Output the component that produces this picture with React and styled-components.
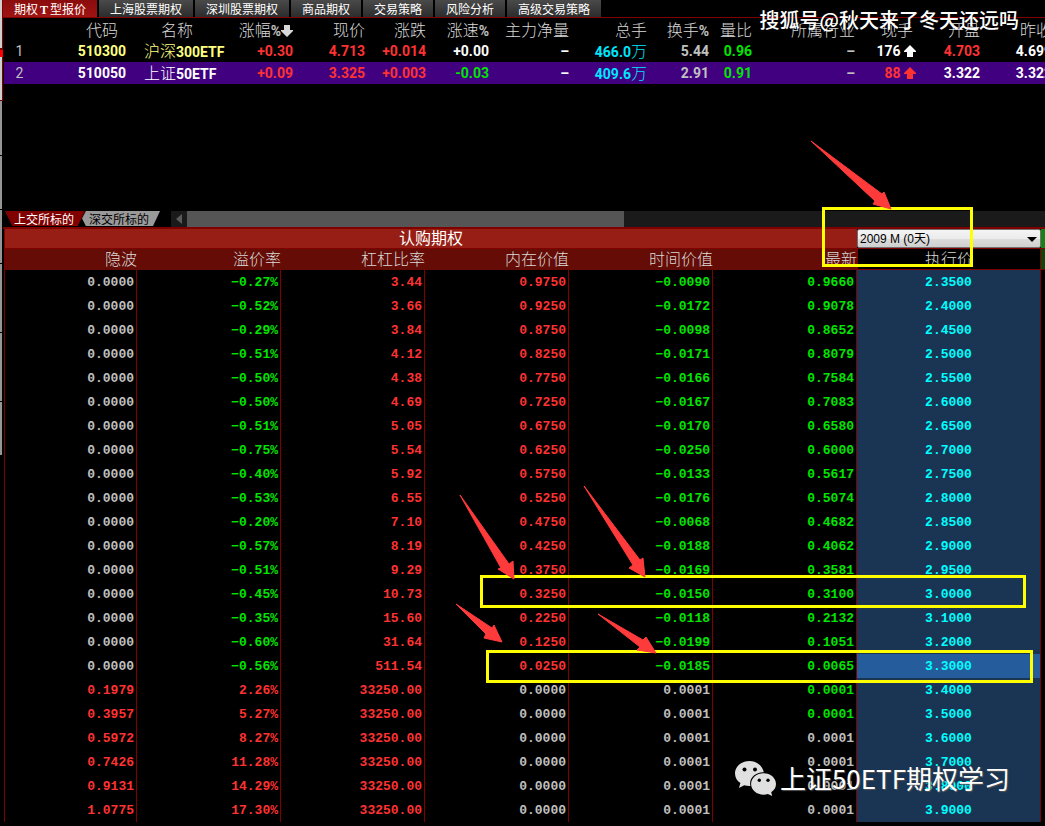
import React from 'react';
import styled, { createGlobalStyle } from 'styled-components';

const RED = '#ff3232';
const GREEN = '#00e600';
const GREY = '#c0c0c0';
const HEAD = '#d8d8d8';
const CYAN = '#00e6ff';
const WHITE = '#ffffff';
const LINE = '#800000';

const marketTabs = ['上海股票期权', '深圳股票期权', '商品期权', '交易策略', '风险分析', '高级交易策略'];

const quoteColumns = [34, 88, 100, 67, 72, 61, 63, 80, 78, 62, 43, 103, 61, 64, 72];

const quotes = [
  {
    id: 1,
    code: '510300',
    name: '沪深',
    suffix: '300ETF',
    nameColor: '#ffff80',
    values: [
      ['+0.30', RED], ['4.713', RED], ['+0.014', RED], ['+0.00', WHITE], ['–', WHITE], ['466.0', CYAN, '万'],
      ['5.44', GREY], ['0.96', GREEN], ['–', GREY], ['176', WHITE, 'up'], ['4.703', RED], ['4.699', WHITE],
    ],
  },
  {
    id: 2,
    code: '510050',
    name: '上证',
    suffix: '50ETF',
    nameColor: WHITE,
    selected: true,
    values: [
      ['+0.09', RED], ['3.325', RED], ['+0.003', RED], ['-0.03', GREEN], ['–', WHITE], ['409.6', CYAN, '万'],
      ['2.91', GREY], ['0.91', GREEN], ['–', GREY], ['88', RED, 'up'], ['3.322', WHITE], ['3.322', WHITE],
    ],
  },
];

const optionHeaders = ['隐波', '溢价率', '杠杠比率', '内在价值', '时间价值', '最新'];

// implied vol, premium, leverage, intrinsic value, time value, last, strike
const options = [
  ['0.0000', '-0.27%', '3.44', '0.9750', '-0.0090', '0.9660', '2.3500'],
  ['0.0000', '-0.52%', '3.66', '0.9250', '-0.0172', '0.9078', '2.4000'],
  ['0.0000', '-0.29%', '3.84', '0.8750', '-0.0098', '0.8652', '2.4500'],
  ['0.0000', '-0.51%', '4.12', '0.8250', '-0.0171', '0.8079', '2.5000'],
  ['0.0000', '-0.50%', '4.38', '0.7750', '-0.0166', '0.7584', '2.5500'],
  ['0.0000', '-0.50%', '4.69', '0.7250', '-0.0167', '0.7083', '2.6000'],
  ['0.0000', '-0.51%', '5.05', '0.6750', '-0.0170', '0.6580', '2.6500'],
  ['0.0000', '-0.75%', '5.54', '0.6250', '-0.0250', '0.6000', '2.7000'],
  ['0.0000', '-0.40%', '5.92', '0.5750', '-0.0133', '0.5617', '2.7500'],
  ['0.0000', '-0.53%', '6.55', '0.5250', '-0.0176', '0.5074', '2.8000'],
  ['0.0000', '-0.20%', '7.10', '0.4750', '-0.0068', '0.4682', '2.8500'],
  ['0.0000', '-0.57%', '8.19', '0.4250', '-0.0188', '0.4062', '2.9000'],
  ['0.0000', '-0.51%', '9.29', '0.3750', '-0.0169', '0.3581', '2.9500'],
  ['0.0000', '-0.45%', '10.73', '0.3250', '-0.0150', '0.3100', '3.0000'],
  ['0.0000', '-0.35%', '15.60', '0.2250', '-0.0118', '0.2132', '3.1000'],
  ['0.0000', '-0.60%', '31.64', '0.1250', '-0.0199', '0.1051', '3.2000'],
  ['0.0000', '-0.56%', '511.54', '0.0250', '-0.0185', '0.0065', '3.3000'],
  ['0.1979', '2.26%', '33250.00', '0.0000', '0.0001', '0.0001', '3.4000'],
  ['0.3957', '5.27%', '33250.00', '0.0000', '0.0001', '0.0001', '3.5000'],
  ['0.5972', '8.27%', '33250.00', '0.0000', '0.0001', '0.0001', '3.6000'],
  ['0.7426', '11.28%', '33250.00', '0.0000', '0.0001', '0.0001', '3.7000'],
  ['0.9131', '14.29%', '33250.00', '0.0000', '0.0001', '0.0001', '3.8000'],
  ['1.0775', '17.30%', '33250.00', '0.0000', '0.0001', '0.0001', '3.9000'],
];

const AT_THE_MONEY = '3.3000';

function optionColor(value, col, strike) {
  if (col === 5) return Number(strike) > 3.5 ? GREY : GREEN;
  if (col === 4) return value.startsWith('-') ? GREEN : GREY;
  if (value.startsWith('-')) return GREEN;
  return value === '0.0000' ? GREY : RED;
}

// Height, fill and edge colour of each slice of the docked side strip, top to bottom:
const stripSlices = [
  [48, '#d0d0d0', LINE], [2, LINE, LINE], [7, '#ff0000', '#ff0000'], [43, '#d0d0d0', LINE], [1, LINE, LINE],
  [54, '#969696'], [1, '#000'], [53, '#969696'], [1, '#000'], [53, '#969696'], [1, '#000'],
  [68, '#969696'], [1, '#000'], [68, '#969696'], [1, '#000'], [53, '#969696'],
];

const arrows = [
  '811,141 882,194 884,192 891,209 873,204 875,201',
  '460,495 509,564 513,561 514,579 498,569 501,568',
  '584,486 640,560 643,558 645,577 629,568 633,565',
  '456,604 492,628 494,625 502,642 484,638 486,634',
  '598,614 643,640 646,637 656,653 637,650 640,647',
];

const SortArrow = () => (
  <ArrowIcon viewBox="0 0 12 12"><path d="M3 0h6v5h3v1L6 12 0 6V5h3z" /></ArrowIcon>
);

const UpArrow = () => (
  <ArrowIcon viewBox="0 0 12 12"><path d="M6 0l6 6v1H9v5H3V7H0V6z" /></ArrowIcon>
);

function QuoteTable() {
  return (
    <Quotes>
      <colgroup>
        {quoteColumns.map((w, i) => <Col key={i} $w={w} />)}
      </colgroup>
      <thead>
        <tr>
          <QuoteHead />
          <QuoteHead $pad={8}>代码</QuoteHead>
          <QuoteHead $pad={33}>名称</QuoteHead>
          <QuoteHead>涨幅<b>%</b><SortArrow /></QuoteHead>
          <QuoteHead>现价</QuoteHead>
          <QuoteHead>涨跌</QuoteHead>
          <QuoteHead>涨速<b>%</b></QuoteHead>
          <QuoteHead>主力净量</QuoteHead>
          <QuoteHead>总手</QuoteHead>
          <QuoteHead>换手<b>%</b></QuoteHead>
          <QuoteHead>量比</QuoteHead>
          <QuoteHead>所属行业</QuoteHead>
          <QuoteHead $pad={3}>现手</QuoteHead>
          <QuoteHead>开盘</QuoteHead>
          <QuoteHead>昨收</QuoteHead>
        </tr>
      </thead>
      <tbody>
        {quotes.map((q) => (
          <QuoteRow key={q.id} $selected={q.selected}>
            <IndexCell>{q.id}</IndexCell>
            <QuoteCell $color={q.nameColor}>{q.code}</QuoteCell>
            <NameCell $color={q.nameColor}><Hanzi>{q.name}</Hanzi>{q.suffix}</NameCell>
            {q.values.map(([value, color, extra], i) => (
              <QuoteCell key={i} $color={color}>
                {value}
                {extra === 'up' && <> <UpArrow /></>}
                {extra === '万' && <Hanzi>万</Hanzi>}
              </QuoteCell>
            ))}
          </QuoteRow>
        ))}
      </tbody>
    </Quotes>
  );
}

function OptionTable() {
  return (
    <Options>
      <colgroup>
        <Col $w={132} />
        <Col $w={144} />
        <Col $w={144} />
        <Col $w={144} />
        <Col $w={144} />
        <Col $w={144} />
        <col />
      </colgroup>
      <thead>
        <tr>
          <TitleCell colSpan={6}>认购期权</TitleCell>
          <SelectCell>
            <SelectWrap>
              <MonthSelect aria-label="到期月份" defaultValue="2009">
                <option value="2009">2009 M (0天)</option>
              </MonthSelect>
              <SelectArrow viewBox="0 0 10 5"><path d="M0 0h10L5 5z" /></SelectArrow>
            </SelectWrap>
          </SelectCell>
        </tr>
        <tr>
          {optionHeaders.map((h) => <OptionHead key={h}>{h}</OptionHead>)}
          <StrikeHead>执行价</StrikeHead>
        </tr>
      </thead>
      <tbody>
        {options.map((row) => {
          const strike = row[6];
          return (
            <tr key={strike}>
              {row.slice(0, 6).map((value, i) => (
                <OptionCell key={i} $color={optionColor(value, i, strike)}>{value.replace('-', '−')}</OptionCell>
              ))}
              <StrikeCell $color="#00ffff" $active={strike === AT_THE_MONEY}>{strike}</StrikeCell>
            </tr>
          );
        })}
      </tbody>
    </Options>
  );
}

function App() {
  return (
    <>
      <GlobalStyle />
      <Page>
        <SideStrip>
          {stripSlices.map(([h, fill, edge], i) => <Slice key={i} $h={h} $fill={fill} $edge={edge} />)}
        </SideStrip>
        <Workspace>
          <MarketTabs>
            <MarketTab $active>期权<TabLetter>T</TabLetter>型报价</MarketTab>
            {marketTabs.map((t) => <MarketTab key={t}>{t}</MarketTab>)}
          </MarketTabs>
          <QuotePane>
            <QuoteTable />
          </QuotePane>
          <TargetBar>
            <TargetTab $active>上交所标的</TargetTab>
            <TargetTab>深交所标的</TargetTab>
            <ScrollBar>
              <ScrollButton aria-label="向左滚动">
                <svg width="6" height="10" viewBox="0 0 6 10"><path d="M6 0v10L0 5z" fill="#5a5a5a" /></svg>
              </ScrollButton>
              <ScrollThumb />
            </ScrollBar>
          </TargetBar>
          <OptionPane>
            <OptionTable />
            <PutEdge>
              <PutTitle />
              <PutHead />
            </PutEdge>
          </OptionPane>
        </Workspace>
        <HighlightBox $x={822} $y={207} $w={151} $h={60} />
        <HighlightBox $x={480} $y={575} $w={546} $h={33} />
        <HighlightBox $x={486} $y={650} $w={547} $h={33} />
        <Arrows width="1045" height="826" aria-hidden="true">
          {arrows.map((points) => <polygon key={points} points={points} />)}
        </Arrows>
        <SohuMark>搜狐号@秋天来了冬天还远吗</SohuMark>
        <WechatMark>
          <WechatIcon viewBox="0 0 41 35">
            <path d="M14.5 0C6.500 0 0 5.500 0 12.500c0 4 2 7.300 5.400 9.600L4 27l5.200-2.800c1.700.5 3.500.8 5.300.8h.9C13.700 17.500 20 11.500 28 11.300h.8C27.600 4.800 21.600 0 14.500 0z" />
            <path d="M28.600 12.300c-7 0-12.500 4.700-12.500 10.700s5.500 10.700 12.500 10.700c1.500 0 3-.3 4.300-.7l4.300 2-1-3.700c3-2 4.800-5 4.800-8.300 0-6-5.500-10.700-12.400-10.700z" />
            <g fill="#000">
              <circle cx="9.500" cy="8.500" r="2" />
              <circle cx="20" cy="8.500" r="2" />
              <circle cx="24.300" cy="19.300" r="1.700" />
              <circle cx="33" cy="19.300" r="1.700" />
            </g>
          </WechatIcon>
          上证50ETF期权学习
        </WechatMark>
      </Page>
    </>
  );
}

const GlobalStyle = createGlobalStyle`
  *, *::before, *::after {
    box-sizing: border-box;
  }
  body {
    margin: 0;
    background: #000;
    overflow: hidden;
    font-family: Roboto, 'Noto Sans CJK SC', sans-serif;
  }
  button {
    border: 0;
    padding: 0;
    font-family: 'Noto Sans CJK SC', sans-serif;
  }
  th, td {
    padding: 0;
    white-space: nowrap;
  }
`;

const Page = styled.div`
  position: relative;
  display: flex;
  min-height: 100vh;
  overflow: hidden;
`;

const SideStrip = styled.aside`
  flex: none;
  width: 3px;
  display: flex;
  flex-direction: column;
`;

const Slice = styled.div`
  height: ${(p) => p.$h}px;
  background: ${(p) => p.$fill};
  border-right: 1px solid ${(p) => p.$edge || '#000'};
`;

const Workspace = styled.main`
  flex: 1;
  min-width: 0;
`;

const MarketTabs = styled.nav`
  display: flex;
  gap: 2px;
  height: 18px;
  border-bottom: 1px solid ${LINE};
`;

const MarketTab = styled.button`
  padding: 0 11px;
  font-size: 12px;
  line-height: 17px;
  white-space: nowrap;
  color: #fff;
  background: ${(p) => (p.$active ? 'linear-gradient(#8a0c0c, #a01414)' : 'linear-gradient(#4a4a4a, #2c2c2c)')};
`;

const TabLetter = styled.b`
  display: inline-block;
  width: 12px;
  text-align: center;
  font-family: 'Liberation Serif', serif;
`;

const QuotePane = styled.section`
  height: 193px;
  padding-left: 1px;
  overflow: hidden;
`;

const Quotes = styled.table`
  table-layout: fixed;
  width: 1048px;
  border-spacing: 0;
  font-size: 14px;
`;

const Col = styled.col`
  width: ${(p) => p.$w}px;
`;

const QuoteHead = styled.th`
  height: 22px;
  padding-right: ${(p) => p.$pad || 0}px;
  font-size: 16px;
  line-height: 18px;
  font-weight: 300;
  font-family: 'Noto Sans CJK SC', sans-serif;
  text-align: right;
  color: ${HEAD};
  b {
    font-size: 14px;
    line-height: 14px;
    font-weight: 700;
    font-family: Roboto, sans-serif;
    color: ${GREY};
  }
`;

const ArrowIcon = styled.svg`
  width: 12px;
  height: 12px;
  fill: currentColor;
  vertical-align: -1px;
`;

const QuoteRow = styled.tr`
  background: ${(p) => (p.$selected ? '#400080' : 'transparent')};
`;

const QuoteCell = styled.td`
  height: 22px;
  line-height: 18px;
  font-weight: 700;
  text-align: right;
  color: ${(p) => p.$color};
`;

const Hanzi = styled.span`
  font-size: 16px;
  line-height: 16px;
  font-weight: 300;
  font-family: 'Noto Sans CJK SC', sans-serif;
`;

const IndexCell = styled(QuoteCell)`
  padding-right: 3px;
  font-weight: 400;
  text-align: center;
  color: ${GREY};
`;

const NameCell = styled(QuoteCell)`
  padding-left: 18px;
  text-align: left;
`;

const TargetBar = styled.div`
  display: flex;
  height: 16px;
  padding-left: 2px;
`;

const TargetTab = styled.button`
  height: 15px;
  padding: 0 11px 0 9px;
  font-size: 12px;
  line-height: 15px;
  color: ${(p) => (p.$active ? '#fff' : '#000')};
  background: ${(p) => (p.$active ? LINE : '#999')};
  clip-path: ${(p) => (p.$active
    ? 'polygon(0 0, 100% 0, 91% 100%, 9% 100%)'
    : 'polygon(5% 0, 100% 0, 91% 100%, 5% 100%, 0 50%)')};
  & + & {
    margin-left: -3px;
    padding: 0 11px 0 7px;
  }
`;

const ScrollBar = styled.div`
  flex: 1;
  display: flex;
  margin-left: 11px;
  background: #1a1a1a;
`;

const ScrollButton = styled.button`
  width: 16px;
  display: flex;
  align-items: center;
  justify-content: center;
  background: #1a1a1a;
`;

const ScrollThumb = styled.div`
  width: 50%;
  background: #555;
`;

const OptionPane = styled.section`
  display: flex;
  padding-left: 1px;
  border-top: 2px solid ${LINE};
`;

const Options = styled.table`
  flex: 1;
  min-width: 0;
  table-layout: fixed;
  border-spacing: 0;
  border-left: 1px solid ${LINE};
`;

const TitleCell = styled.th`
  height: 20px;
  border-bottom: 1px solid ${LINE};
  font-size: 16px;
  line-height: 19px;
  font-weight: 400;
  color: #fff;
  background: #961e14;
`;

const SelectCell = styled.th`
  border-bottom: 1px solid ${LINE};
`;

const SelectWrap = styled.div`
  position: relative;
  height: 19px;
`;

const MonthSelect = styled.select`
  appearance: none;
  display: block;
  width: 100%;
  height: 100%;
  padding: 0 16px 0 2px;
  border: 1px solid #707070;
  border-radius: 2px;
  font-size: 12px;
  font-family: 'Liberation Sans', 'Noto Sans CJK SC', sans-serif;
  color: #000;
  background: linear-gradient(#f4f4f4 0%, #ebebeb 50%, #dddddd 50%, #cfcfcf 100%);
`;

const SelectArrow = styled.svg`
  position: absolute;
  top: 8px;
  right: 4px;
  width: 10px;
  height: 5px;
  pointer-events: none;
`;

const OptionHead = styled.th`
  height: 21px;
  font-size: 16px;
  line-height: 18px;
  font-weight: 300;
  font-family: 'Noto Sans CJK SC', sans-serif;
  text-align: right;
  vertical-align: top;
  color: ${HEAD};
  background: #640c05;
`;

const StrikeHead = styled(OptionHead)`
  border: solid ${LINE};
  border-width: 0 1px 1px;
  text-align: center;
  background: #000;
`;

const OptionCell = styled.td`
  height: 24px;
  padding-right: 2px;
  border-right: 1px solid ${LINE};
  font: bold 13px 'Liberation Mono', monospace;
  text-align: right;
  color: ${(p) => p.$color};
`;

const StrikeCell = styled(OptionCell)`
  padding: 0;
  text-align: center;
  background: ${(p) => (p.$active ? '#255c9c' : '#1a3554')};
`;

const PutEdge = styled.div`
  width: 4px;
`;

const PutTitle = styled.div`
  height: 20px;
  border-bottom: 1px solid ${LINE};
  background: #148214;
`;

const PutHead = styled.div`
  height: 21px;
  border-bottom: 1px solid ${LINE};
  background: #0c460c;
`;

const HighlightBox = styled.div`
  position: absolute;
  left: ${(p) => p.$x}px;
  top: ${(p) => p.$y}px;
  width: ${(p) => p.$w}px;
  height: ${(p) => p.$h}px;
  border: 3px solid #ffff00;
  pointer-events: none;
`;

const Arrows = styled.svg`
  position: absolute;
  left: 0;
  top: 0;
  fill: #ff3a3a;
  stroke: #ff3a3a;
  stroke-width: 1px;
  stroke-linejoin: round;
  pointer-events: none;
`;

const SohuMark = styled.div`
  position: absolute;
  top: 5px;
  right: 26px;
  font-size: 20px;
  line-height: 30px;
  font-weight: 500;
  font-family: 'Noto Sans CJK SC', sans-serif;
  white-space: nowrap;
  color: #fff;
`;

const WechatMark = styled.div`
  position: absolute;
  right: 35px;
  bottom: 28px;
  display: flex;
  align-items: center;
  gap: 4px;
  font-size: 26px;
  line-height: 40px;
  font-family: 'Noto Sans CJK SC', sans-serif;
  white-space: nowrap;
  color: #fff;
  text-shadow: 1px 1px 1px #555;
`;

const WechatIcon = styled.svg`
  width: 41px;
  height: 35px;
  fill: #e0e0e0;
`;

export default App;
